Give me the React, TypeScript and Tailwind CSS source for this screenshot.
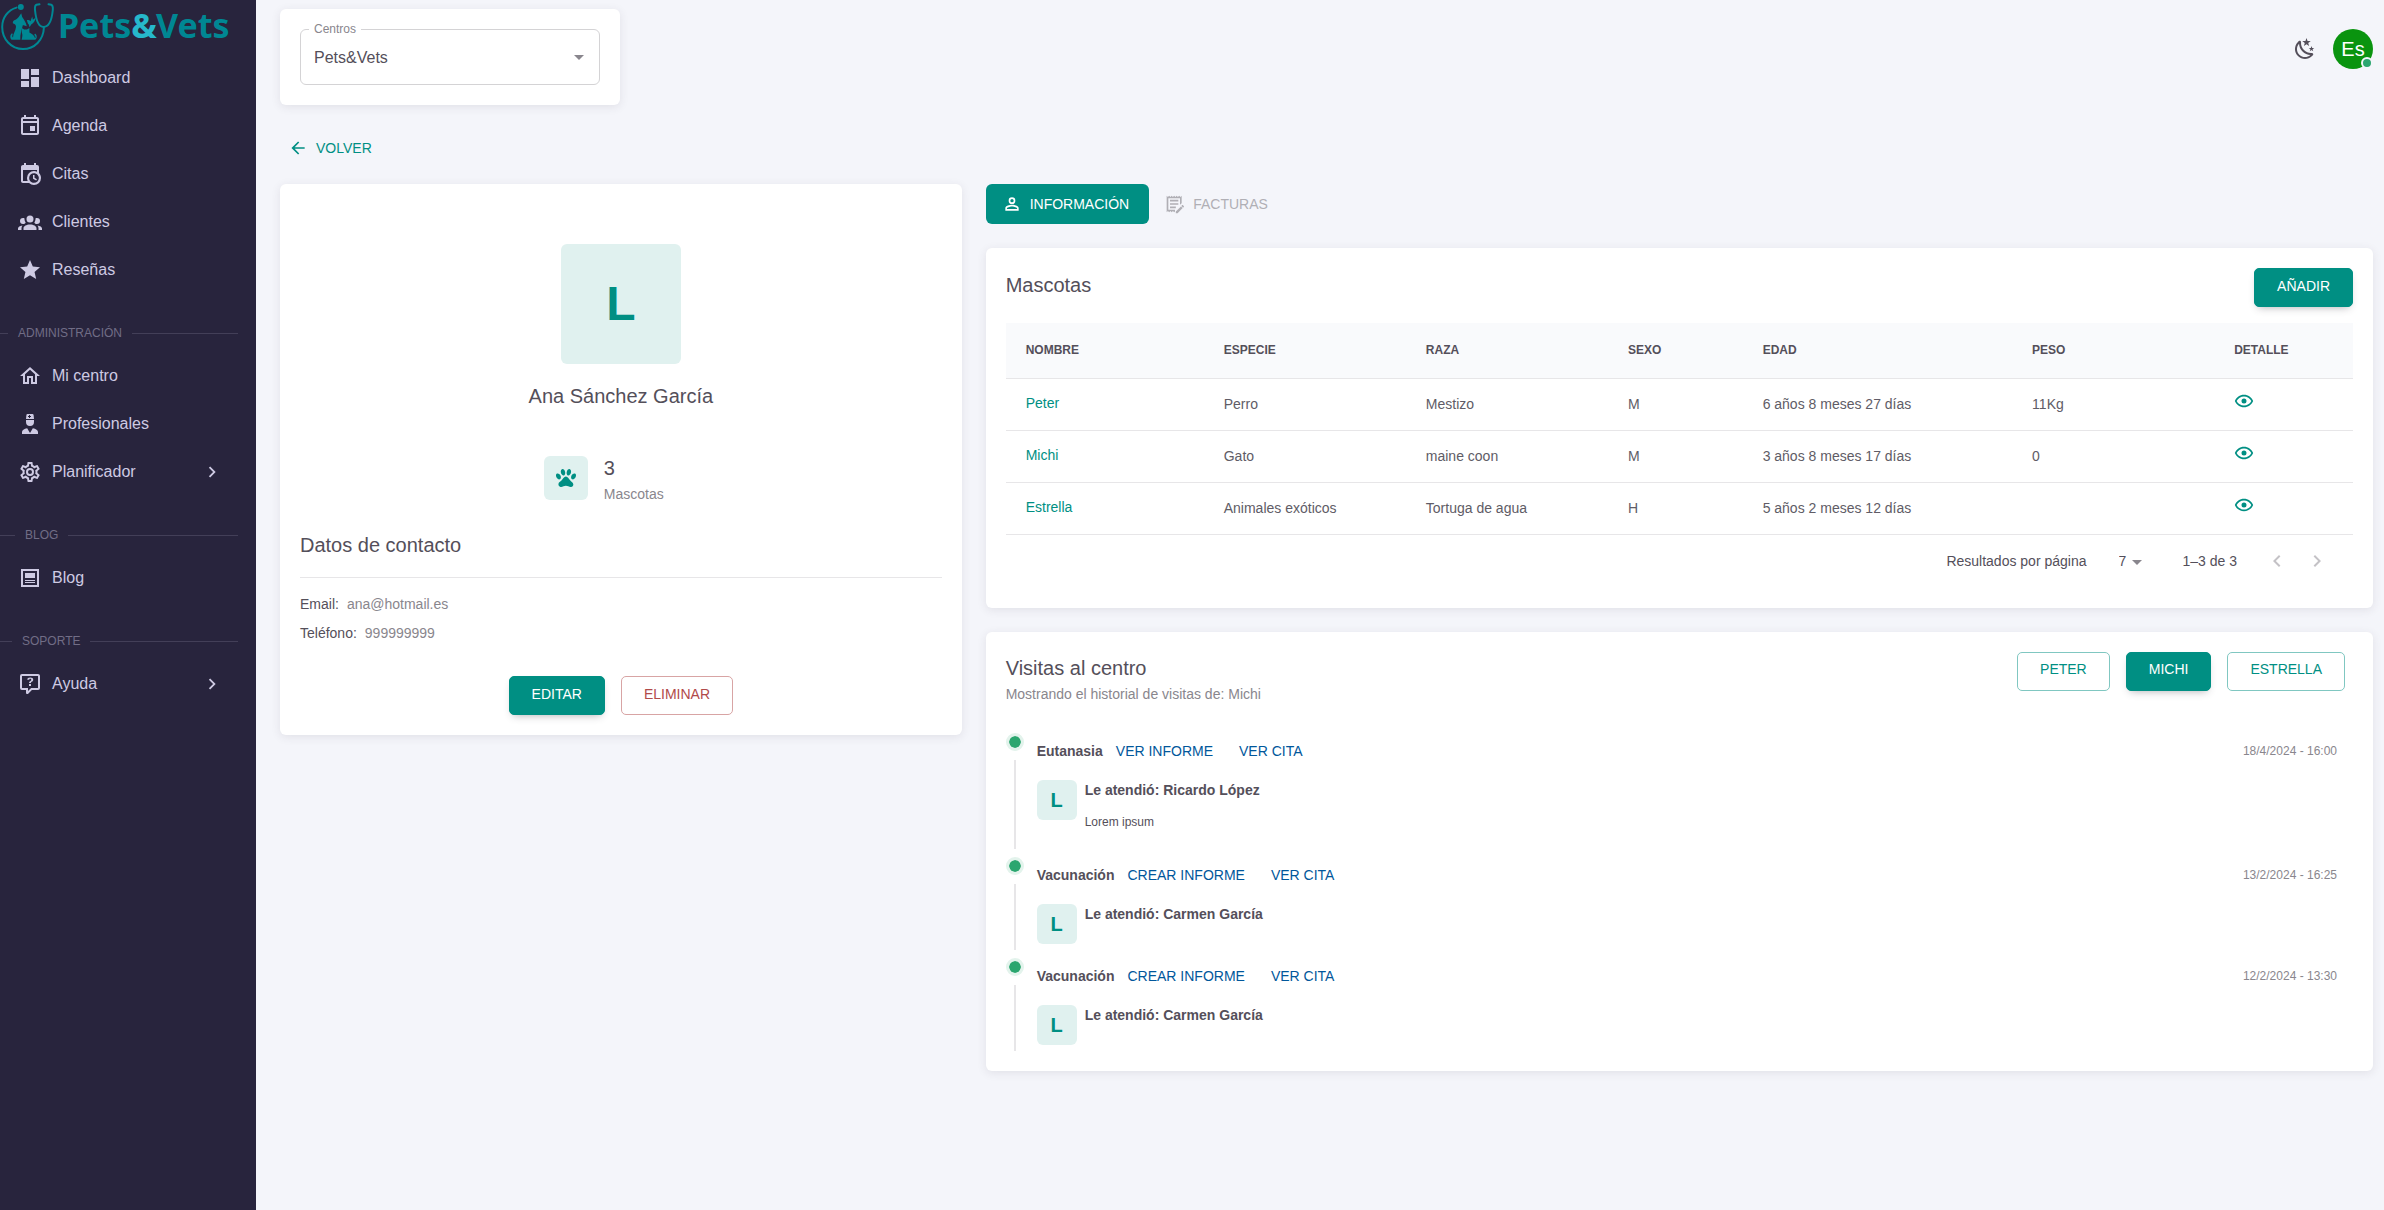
import { useState } from 'react';
import type { ReactNode } from 'react';
import clsx from 'clsx';

const ICONS = {
  dashboard: 'M13,3V9H21V3M13,21H21V11H13M3,21H11V15H3M3,13H11V3H3V13Z',
  agenda:
    'M12 12H17V17H12V12M19 3H18V1H16V3H8V1H6V3H5C3.9 3 3 3.9 3 5V19C3 20.1 3.9 21 5 21H19C20.1 21 21 20.1 21 19V5C21 3.9 20.1 3 19 3M19 5V7H5V5H19M5 19V9H19V19H5Z',
  citas:
    'M15,13H16.5V15.82L18.94,17.23L18.19,18.53L15,16.69V13M19,8H5V19H9.67C9.24,18.09 9,17.07 9,16A7,7 0 0,1 16,9C17.07,9 18.09,9.24 19,9.67V8M5,21C3.89,21 3,20.1 3,19V5C3,3.89 3.89,3 5,3H6V1H8V3H16V1H18V3H19A2,2 0 0,1 21,5V11.1C22.24,12.36 23,14.09 23,16A7,7 0 0,1 16,23C14.09,23 12.36,22.24 11.1,21H5M16,11.15A4.85,4.85 0 0,0 11.15,16C11.15,18.68 13.32,20.85 16,20.85A4.85,4.85 0 0,0 20.85,16C20.85,13.32 18.68,11.15 16,11.15Z',
  clientes:
    'M12,5.5A3.5,3.5 0 0,1 15.5,9A3.5,3.5 0 0,1 12,12.5A3.5,3.5 0 0,1 8.5,9A3.5,3.5 0 0,1 12,5.5M5,8C5.56,8 6.08,8.15 6.53,8.42C6.38,9.85 6.8,11.27 7.66,12.38C7.16,13.34 6.16,14 5,14A3,3 0 0,1 2,11A3,3 0 0,1 5,8M19,8A3,3 0 0,1 22,11A3,3 0 0,1 19,14C17.84,14 16.84,13.34 16.34,12.38C17.2,11.27 17.62,9.85 17.47,8.42C17.92,8.15 18.44,8 19,8M5.5,18.25C5.5,16.18 8.41,14.5 12,14.5C15.59,14.5 18.5,16.18 18.5,18.25V20H5.5V18.25M0,20V18.5C0,17.11 1.89,15.94 4.45,15.6C3.86,16.28 3.5,17.22 3.5,18.25V20H0M24,20H20.5V18.25C20.5,17.22 20.14,16.28 19.55,15.6C22.11,15.94 24,17.11 24,18.5V20Z',
  star: 'M12,17.27L18.18,21L16.54,13.97L22,9.24L14.81,8.62L12,2L9.19,8.62L2,9.24L7.45,13.97L5.82,21L12,17.27Z',
  home: 'M12 5.69L17 10.19V18H15V12H9V18H7V10.19L12 5.69M12 3L2 12H5V20H11V14H13V20H19V12H22',
  doctor:
    'M14.84,16.26C17.86,16.83 20,18.29 20,20V22H4V20C4,18.29 6.14,16.83 9.16,16.26L12,21L14.84,16.26M8,8H16V10A4,4 0 0,1 12,14A4,4 0 0,1 8,10V8M8,7L8.41,2.9C8.46,2.39 8.89,2 9.41,2H14.6C15.11,2 15.54,2.39 15.59,2.9L16,7H8M12,3H11V4H10V5H11V6H12V5H13V4H12V3Z',
  cog: 'M12,8A4,4 0 0,1 16,12A4,4 0 0,1 12,16A4,4 0 0,1 8,12A4,4 0 0,1 12,8M12,10A2,2 0 0,0 10,12A2,2 0 0,0 12,14A2,2 0 0,0 14,12A2,2 0 0,0 12,10M10,22C9.75,22 9.54,21.82 9.5,21.58L9.13,18.93C8.5,18.68 7.96,18.34 7.44,17.94L4.95,18.95C4.73,19.03 4.46,18.95 4.34,18.73L2.34,15.27C2.21,15.05 2.27,14.78 2.46,14.63L4.57,12.97L4.5,12L4.57,11L2.46,9.37C2.27,9.22 2.21,8.95 2.34,8.73L4.34,5.27C4.46,5.05 4.73,4.96 4.95,5.05L7.44,6.05C7.96,5.66 8.5,5.32 9.13,5.07L9.5,2.42C9.54,2.18 9.75,2 10,2H14C14.25,2 14.46,2.18 14.5,2.42L14.87,5.07C15.5,5.32 16.04,5.66 16.56,6.05L19.05,5.05C19.27,4.96 19.54,5.05 19.66,5.27L21.66,8.73C21.79,8.95 21.73,9.22 21.54,9.37L19.43,11L19.5,12L19.43,13L21.54,14.63C21.73,14.78 21.79,15.05 21.66,15.27L19.66,18.73C19.54,18.95 19.27,19.04 19.05,18.95L16.56,17.95C16.04,18.34 15.5,18.68 14.87,18.93L14.5,21.58C14.46,21.82 14.25,22 14,22H10M11.25,4L10.88,6.61C9.68,6.86 8.62,7.5 7.85,8.39L5.44,7.35L4.69,8.65L6.8,10.2C6.4,11.37 6.4,12.64 6.8,13.8L4.68,15.36L5.43,16.66L7.86,15.62C8.63,16.5 9.68,17.14 10.87,17.38L11.24,20H12.76L13.13,17.39C14.32,17.14 15.37,16.5 16.14,15.62L18.57,16.66L19.32,15.36L17.2,13.81C17.6,12.64 17.6,11.37 17.2,10.2L19.31,8.65L18.56,7.35L16.15,8.39C15.38,7.5 14.32,6.86 13.12,6.62L12.75,4H11.25Z',
  post: 'M19 5V19H5V5H19M21 3H3V21H21V3M17 17H7V16H17V17M17 15H7V14H17V15M17 12H7V7H17V12Z',
  help: 'M4,2A2,2 0 0,0 2,4V16A2,2 0 0,0 4,18H8V21A1,1 0 0,0 9,22H9.5C9.75,22 10,21.9 10.2,21.71L13.9,18H20A2,2 0 0,0 22,16V4C22,2.89 21.1,2 20,2H4M4,4H20V16H13.08L10,19.08V16H4V4M12.19,5.5C11.3,5.5 10.59,5.68 10.05,6.04C9.5,6.4 9.22,7 9.27,7.69H11.24C11.24,7.41 11.34,7.2 11.5,7.06C11.7,6.92 11.92,6.85 12.19,6.85C12.5,6.85 12.77,6.93 12.95,7.11C13.13,7.28 13.22,7.5 13.22,7.8C13.22,8.08 13.14,8.33 13,8.54C12.83,8.76 12.62,8.94 12.36,9.08C11.84,9.4 11.5,9.68 11.29,9.92C11.1,10.16 11,10.5 11,11H13C13,10.72 13.05,10.5 13.14,10.32C13.23,10.15 13.4,10 13.66,9.85C14.12,9.64 14.5,9.36 14.79,9C15.08,8.63 15.23,8.24 15.23,7.8C15.23,7.1 14.96,6.54 14.42,6.12C13.88,5.71 13.13,5.5 12.19,5.5M11,12V14H13V12H11Z',
  chevronRight: 'M8.59,16.58L13.17,12L8.59,7.41L10,6L16,12L10,18L8.59,16.58Z',
  chevronLeft: 'M15.41,16.58L10.83,12L15.41,7.41L14,6L8,12L14,18L15.41,16.58Z',
  caret: 'M7 10l5 5 5-5z',
  night:
    'M17.75,4.09L15.22,6.03L16.13,9.09L13.5,7.28L10.87,9.09L11.78,6.03L9.25,4.09L12.44,4L13.5,1L14.56,4L17.75,4.09M21.25,11L19.61,12.25L20.2,14.23L18.5,13.06L16.8,14.23L17.39,12.25L15.75,11L17.81,10.95L18.5,9L19.19,10.95L21.25,11M18.97,15.95C19.8,15.87 20.69,17.05 20.16,17.8C19.84,18.25 19.5,18.67 19.08,19.07C15.17,23 8.84,23 4.94,19.07C1.03,15.17 1.03,8.83 4.94,4.93C5.34,4.53 5.76,4.17 6.21,3.85C6.96,3.32 8.14,4.21 8.06,5.04C7.79,7.9 8.75,10.87 10.95,13.06C13.14,15.26 16.1,16.22 18.97,15.95M17.33,17.97C14.5,17.81 11.7,16.64 9.53,14.5C7.36,12.31 6.2,9.5 6.04,6.68C3.23,9.82 3.34,14.64 6.35,17.66C9.37,20.67 14.19,20.78 17.33,17.97Z',
  paw: 'M8.35,3C9.53,2.83 10.78,4.12 11.14,5.9C11.5,7.67 10.85,9.25 9.67,9.43C8.5,9.61 7.24,8.32 6.87,6.54C6.5,4.77 7.17,3.19 8.35,3M15.5,3C16.69,3.19 17.35,4.77 17,6.54C16.62,8.32 15.37,9.61 14.19,9.43C13,9.25 12.35,7.67 12.72,5.9C13.08,4.12 14.33,2.83 15.5,3M3,7.6C4.14,7.11 5.69,8 6.5,9.55C7.26,11.13 7,12.79 5.87,13.28C4.74,13.77 3.2,12.89 2.41,11.32C1.62,9.75 1.9,8.08 3,7.6M21,7.6C22.1,8.08 22.38,9.75 21.59,11.32C20.8,12.89 19.26,13.77 18.13,13.28C17,12.79 16.74,11.13 17.5,9.55C18.31,8 19.86,7.11 21,7.6M19.33,18.38C19.37,19.32 18.65,20.36 17.79,20.75C16,21.57 13.88,19.87 11.89,19.87C9.9,19.87 7.76,21.64 6,20.75C5,20.26 4.31,18.96 4.44,17.88C4.62,16.39 6.41,15.59 7.47,14.5C8.88,13.09 9.88,10.44 11.89,10.44C13.89,10.44 14.95,13.05 16.3,14.5C17.41,15.72 19.26,16.75 19.33,18.38Z',
  account:
    'M12,4A4,4 0 0,1 16,8A4,4 0 0,1 12,12A4,4 0 0,1 8,8A4,4 0 0,1 12,4M12,6A2,2 0 0,0 10,8A2,2 0 0,0 12,10A2,2 0 0,0 14,8A2,2 0 0,0 12,6M12,13C14.67,13 20,14.33 20,17V20H4V17C4,14.33 9.33,13 12,13M12,14.9C9.03,14.9 5.9,16.36 5.9,17V18.1H18.1V17C18.1,16.36 14.97,14.9 12,14.9Z',
  invoice:
    'M2,2L3.5,3.5L5,2L6.5,3.5L8,2L9.5,3.5L11,2L12.5,3.5L14,2L15.5,3.5L17,2L18.5,3.5L20,2V11L18,13V5H4V19H12V21L11,22L9.5,20.5L8,22L6.5,20.5L5,22L3.5,20.5L2,22V2M6,7H16V9H6V7M6,11H16V13H6V11M6,15H13V17H6V15M21,13.1C20.9,13.1 20.7,13.2 20.6,13.3L19.6,14.3L21.7,16.4L22.7,15.4C22.9,15.2 22.9,14.8 22.7,14.6L21.4,13.3C21.3,13.2 21.2,13.1 21,13.1M19.1,14.9L13,20.9V23H15.1L21.2,16.9L19.1,14.9Z',
  eye: 'M12,9A3,3 0 0,1 15,12A3,3 0 0,1 12,15A3,3 0 0,1 9,12A3,3 0 0,1 12,9M12,4.5C17,4.5 21.27,7.61 23,12C21.27,16.39 17,19.5 12,19.5C7,19.5 2.73,16.39 1,12C2.73,7.61 7,4.5 12,4.5M3.18,12C4.83,15.36 8.24,17.5 12,17.5C15.76,17.5 19.17,15.36 20.82,12C19.17,8.64 15.76,6.5 12,6.5C8.24,6.5 4.83,8.64 3.18,12Z',
  arrowLeft: 'M20,11V13H8L13.5,18.5L12.08,19.92L4.16,12L12.08,4.08L13.5,5.5L8,11H20Z',
};

type IconName = keyof typeof ICONS;

interface NavItem {
  label: string;
  icon: IconName;
  expandable?: boolean;
}

interface NavSection {
  title?: string;
  line?: string;
  items: NavItem[];
}

const NAV: NavSection[] = [
  {
    items: [
      { label: 'Dashboard', icon: 'dashboard' },
      { label: 'Agenda', icon: 'agenda' },
      { label: 'Citas', icon: 'citas' },
      { label: 'Clientes', icon: 'clientes' },
      { label: 'Reseñas', icon: 'star' },
    ],
  },
  {
    title: 'ADMINISTRACIÓN',
    line: 'w-2',
    items: [
      { label: 'Mi centro', icon: 'home' },
      { label: 'Profesionales', icon: 'doctor' },
      { label: 'Planificador', icon: 'cog', expandable: true },
    ],
  },
  { title: 'BLOG', line: 'w-[15px]', items: [{ label: 'Blog', icon: 'post' }] },
  { title: 'SOPORTE', line: 'w-3', items: [{ label: 'Ayuda', icon: 'help', expandable: true }] },
];

const COLUMNS = [
  { label: 'NOMBRE', width: 'w-[14.7%]' },
  { label: 'ESPECIE', width: 'w-[15%]' },
  { label: 'RAZA', width: 'w-[15%]' },
  { label: 'SEXO', width: 'w-[10%]' },
  { label: 'EDAD', width: 'w-[20%]' },
  { label: 'PESO', width: 'w-[15%]' },
  { label: 'DETALLE', width: 'w-[10.3%]' },
];

const PETS = [
  { nombre: 'Peter', especie: 'Perro', raza: 'Mestizo', sexo: 'M', edad: '6 años 8 meses 27 días', peso: '11Kg' },
  { nombre: 'Michi', especie: 'Gato', raza: 'maine coon', sexo: 'M', edad: '3 años 8 meses 17 días', peso: '0' },
  { nombre: 'Estrella', especie: 'Animales exóticos', raza: 'Tortuga de agua', sexo: 'H', edad: '5 años 2 meses 12 días', peso: '' },
];

const VISITS = [
  { tipo: 'Eutanasia', informe: 'VER INFORME', fecha: '18/4/2024 - 16:00', vet: 'Ricardo López', nota: 'Lorem ipsum' },
  { tipo: 'Vacunación', informe: 'CREAR INFORME', fecha: '13/2/2024 - 16:25', vet: 'Carmen García' },
  { tipo: 'Vacunación', informe: 'CREAR INFORME', fecha: '12/2/2024 - 13:30', vet: 'Carmen García' },
];

function Icon({ name, className = 'size-6' }: { name: IconName; className?: string }) {
  return (
    <svg viewBox="0 0 24 24" fill="currentColor" aria-hidden="true" className={clsx('shrink-0', className)}>
      <path d={ICONS[name]} fillRule={name === 'invoice' ? 'evenodd' : undefined} />
    </svg>
  );
}

function Card({ className, children }: { className?: string; children: ReactNode }) {
  return (
    <section className={clsx('rounded-md bg-white p-5 shadow-[0_2px_10px_0_rgba(58,53,65,0.1)]', className)}>
      {children}
    </section>
  );
}

type Variant = 'solid' | 'outline' | 'danger';

function Button({ variant = 'solid', onClick, children }: {
  variant?: Variant;
  onClick?: () => void;
  children: ReactNode;
}) {
  return (
    <button
      onClick={onClick}
      className={clsx(
        'h-[39px] rounded-[5px] border px-[22px] pb-1 text-sm',
        variant === 'solid' && 'border-[#008f83] bg-[#008f83] text-white shadow-[0_4px_8px_-4px_rgba(58,53,65,0.42)]',
        variant === 'outline' && 'border-[#80c7c1] text-[#008f83]',
        variant === 'danger' && 'border-[#d8a4a4] text-[#b14a4a]'
      )}
    >
      {children}
    </button>
  );
}

function Logo() {
  return (
    <a href="#" className="flex h-[54px] items-start">
      <svg viewBox="0 0 58 52" className="h-[52px] w-[58px] shrink-0" aria-hidden="true">
        <g fill="none" stroke="#008793" strokeWidth="2" strokeLinecap="round">
          <path d="M16.5 7.6C8 10 2.2 17.5 2.2 27C2.2 39 11 49 23 49C34.5 49 43.5 40 43.9 27.5" />
          <path d="M39.5 4.3L36.5 4.8C34.6 5.5 34.8 8 35 10C35.7 17 37.5 27 43.5 27C50 27 52.2 16 52.8 10C53 7.5 53 5.5 51.2 4.8L48.5 4.3" />
        </g>
        <g fill="#008793">
          <circle cx="20.8" cy="6.9" r="3" />
          <path d="M11.5 39.8C10 38.5 9.8 35.5 11.2 34C12 33.2 13 33.6 12.6 34.6C12 36 12.2 37 13 37.6C13 33.5 15.7 31 16 27C15.9 25.7 15.6 24.8 14.8 24.3L12.9 23.3C12.7 21.9 13.1 20.9 14.3 20.3C16 19.5 17.5 18.5 18.7 17L21.2 13.2L22.2 17C24 19.5 26 22.5 26.8 26.2C25.9 25.6 24.3 26 22.8 25.2C21.7 30 20 34 20.3 39.8Z" />
          <path d="M21.8 28L24.2 29.5H27L29.4 28V32.5C32.5 34 34.5 36 35 38C36 37.8 35.5 36.5 34.7 35.5C34 34.4 34.7 33.4 35.7 34C37.3 35.5 37.2 39.2 35 39.8H21.6C22.3 37 22.8 35 21.8 32.5Z" />
          <path d="M26.8 20.3C28.3 19.8 29.6 20.2 30.5 21.2L32.2 16.5L32.9 19.8L35.8 17.6C35.2 20.8 33.7 23.5 31.2 24.5L29.6 27.2L28.8 24.5C27.6 24 27.6 21.8 26.8 20.3Z" />
        </g>
      </svg>
      <span className="font-['Noto_Sans',sans-serif] text-[34px] leading-[50px] font-bold text-[#008793]">
        Pets<span className="text-[#26b8cb]">&amp;</span>Vets
      </span>
    </a>
  );
}

function Sidebar() {
  return (
    <aside className="w-64 shrink-0 bg-[#28243d] text-[#cecae3]">
      <Logo />
      <nav>
        {NAV.map((section, i) => (
          <div key={i}>
            {section.title && (
              <div className="flex h-[58px] items-center gap-[10px] pt-5 pr-[18px] text-xs text-[#716d86]">
                <span className={clsx('h-px bg-[#433f58]', section.line)} />
                {section.title}
                <span className="h-px flex-1 bg-[#433f58]" />
              </div>
            )}
            {section.items.map(item => (
              <a key={item.label} href="#" className="flex h-12 items-center pr-[33px] pl-[18px] text-base">
                <Icon name={item.icon} />
                <span className="flex-1 pl-[10px]">{item.label}</span>
                {item.expandable && <Icon name="chevronRight" className="size-[22px]" />}
              </a>
            ))}
          </div>
        ))}
      </nav>
    </aside>
  );
}

function TopBar() {
  return (
    <header className="flex items-start justify-between">
      <Card className="w-[340px]">
        <div className="relative">
          <label htmlFor="centro" className="absolute -top-2 left-[9px] bg-white px-[5px] text-xs text-[#89868d]">
            Centros
          </label>
          <select
            id="centro"
            className="h-14 w-full appearance-none rounded-md border border-[#d4d3d5] px-[13px] pt-[2px] text-base text-[#544f5a]"
          >
            <option>Pets&amp;Vets</option>
          </select>
          <span className="pointer-events-none absolute top-4 right-[9px] text-[#89868d]">
            <Icon name="caret" />
          </span>
        </div>
      </Card>
      <div className="flex items-center gap-4 pt-5">
        <button aria-label="Cambiar tema" className="text-[#544f5a]">
          <Icon name="night" />
        </button>
        <button className="relative size-10 rounded-full bg-[#0a940f] text-xl text-white">
          Es
          <span className="absolute right-0 bottom-0 size-3 rounded-full border-2 border-[#f4f5fa] bg-[#2ba66f]" />
        </button>
      </div>
    </header>
  );
}

function ClientCard() {
  return (
    <Card className="pt-[60px]">
      <div className="flex flex-col items-center">
        <div className="flex size-[120px] items-center justify-center rounded-md bg-[#e0f1ef] text-5xl font-bold text-[#008f83]">
          L
        </div>
        <h2 className="mt-4 text-xl leading-8">Ana Sánchez García</h2>
        <div className="mt-10 flex items-center gap-4 pr-[34px]">
          <div className="flex size-11 items-center justify-center rounded-md bg-[#e0f1ef] text-[#008f83]">
            <Icon name="paw" />
          </div>
          <div>
            <p className="text-xl leading-8">3</p>
            <p className="text-sm text-[#89868d]">Mascotas</p>
          </div>
        </div>
      </div>
      <h3 className="mt-[25px] border-b border-[#e7e6e8] pb-4 text-xl leading-8">Datos de contacto</h3>
      <dl className="mt-4 flex flex-col gap-2 text-sm leading-[21px]">
        <div className="flex gap-2">
          <dt>Email:</dt>
          <dd className="text-[#89868d]">ana@hotmail.es</dd>
        </div>
        <div className="flex gap-2">
          <dt>Teléfono:</dt>
          <dd className="text-[#89868d]">999999999</dd>
        </div>
      </dl>
      <div className="mt-8 flex justify-center gap-4">
        <Button>EDITAR</Button>
        <Button variant="danger">ELIMINAR</Button>
      </div>
    </Card>
  );
}

function PetsCard() {
  return (
    <Card className="pb-[21px]">
      <div className="flex items-start justify-between">
        <h3 className="pt-px text-xl leading-8">Mascotas</h3>
        <Button>AÑADIR</Button>
      </div>
      <table className="mt-4 w-full table-fixed text-left text-sm">
        <thead>
          <tr className="h-[55px] border-b border-[#e7e6e8] bg-[#f9fafc] text-xs">
            {COLUMNS.map(col => (
              <th key={col.label} className={clsx('px-5 font-bold', col.width)}>
                {col.label}
              </th>
            ))}
          </tr>
        </thead>
        <tbody>
          {PETS.map(pet => (
            <tr key={pet.nombre} className="h-[52px] border-b border-[#e7e6e8] text-[#605c66]">
              <td className="px-5 pb-[2px]">
                <a href="#" className="text-[#008f83]">{pet.nombre}</a>
              </td>
              <td className="px-5">{pet.especie}</td>
              <td className="px-5">{pet.raza}</td>
              <td className="px-5">{pet.sexo}</td>
              <td className="px-5">{pet.edad}</td>
              <td className="px-5">{pet.peso}</td>
              <td className="px-5 pb-[6px]">
                <button aria-label={`Ver ${pet.nombre}`} className="block text-[#008f83]">
                  <Icon name="eye" className="size-5" />
                </button>
              </td>
            </tr>
          ))}
        </tbody>
      </table>
      <div className="flex h-[52px] items-center justify-end pr-4 text-sm">
        <label htmlFor="por-pagina">Resultados por página</label>
        <div className="relative ml-8 w-9">
          <select id="por-pagina" className="w-full appearance-none">
            <option>7</option>
          </select>
          <span className="pointer-events-none absolute -top-px right-[6px] text-[#89868d]">
            <Icon name="caret" />
          </span>
        </div>
        <span className="ml-7">1–3 de 3</span>
        <div className="ml-5 flex text-[#c4c2c6]">
          <button disabled aria-label="Página anterior" className="p-2">
            <Icon name="chevronLeft" />
          </button>
          <button disabled aria-label="Página siguiente" className="p-2">
            <Icon name="chevronRight" />
          </button>
        </div>
      </div>
    </Card>
  );
}

function VisitsCard() {
  const [selected, setSelected] = useState('Michi');

  return (
    <Card>
      <div className="flex items-start justify-between">
        <div>
          <h3 className="text-xl leading-8">Visitas al centro</h3>
          <p className="text-sm text-[#89868d]">Mostrando el historial de visitas de: {selected}</p>
        </div>
        <div className="flex gap-4 pr-2">
          {PETS.map(pet => (
            <Button
              key={pet.nombre}
              variant={selected === pet.nombre ? 'solid' : 'outline'}
              onClick={() => setSelected(pet.nombre)}
            >
              {pet.nombre.toUpperCase()}
            </Button>
          ))}
        </div>
      </div>
      <ul className="mt-[21px]">
        {VISITS.map(visit => (
          <li key={visit.fecha} className="flex gap-[13px]">
            <div className="flex flex-col items-center">
              <span className="mt-2 mb-[9px] size-[18px] rounded-full border-3 border-[#e3f3ec] bg-[#2ba66f] bg-clip-padding" />
              <span className="w-[2px] flex-1 bg-[#e7e6e8]" />
            </div>
            <div className="flex-1 pt-4 pb-[6px]">
              <div className="flex h-5 items-center pr-4">
                <span className="text-sm font-bold">{visit.tipo}</span>
                <a href="#" className="ml-[13px] text-sm text-[#01579b]">{visit.informe}</a>
                <a href="#" className="ml-[26px] text-sm text-[#01579b]">VER CITA</a>
                <span className="ml-auto text-xs text-[#89868d]">{visit.fecha}</span>
              </div>
              <div className="mt-[19px] flex gap-2">
                <div className="flex size-10 items-center justify-center rounded-md bg-[#e0f1ef] text-xl font-bold text-[#008f83]">
                  L
                </div>
                <div>
                  <p className="text-sm font-bold">Le atendió: {visit.vet}</p>
                  {visit.nota && <p className="mt-[14px] pb-[13px] text-xs">{visit.nota}</p>}
                </div>
              </div>
            </div>
          </li>
        ))}
      </ul>
    </Card>
  );
}

export default function App() {
  const [tab, setTab] = useState('info');

  return (
    <div className="flex min-h-screen bg-[#f4f5fa] font-['Liberation_Sans',sans-serif] text-[#544f5a]">
      <Sidebar />
      <main className="min-w-0 flex-1 pt-[9px] pr-[11px] pb-6 pl-6">
        <TopBar />
        <button className="mt-[33px] flex items-center gap-2 pl-2 text-sm text-[#008f83]">
          <Icon name="arrowLeft" className="size-5" />
          VOLVER
        </button>
        <div className="mt-[26px] grid grid-cols-12 items-start gap-6">
          <div className="col-span-4">
            <ClientCard />
          </div>
          <div className="col-span-8 flex flex-col gap-6">
            <div role="tablist" className="flex h-10 text-sm">
              <button
                role="tab"
                aria-selected={tab === 'info'}
                onClick={() => setTab('info')}
                className={clsx(
                  'flex items-center gap-2 rounded-md pr-5 pl-4',
                  tab === 'info' ? 'bg-[#008f83] text-white' : 'text-[#b0afb5]'
                )}
              >
                <Icon name="account" className="size-5" />
                <span className="pb-px">INFORMACIÓN</span>
              </button>
              <button
                role="tab"
                aria-selected={tab === 'facturas'}
                onClick={() => setTab('facturas')}
                className={clsx(
                  'flex items-center gap-2 rounded-md pr-5 pl-4',
                  tab === 'facturas' ? 'bg-[#008f83] text-white' : 'text-[#b0afb5]'
                )}
              >
                <Icon name="invoice" className="size-5" />
                <span className="pb-px">FACTURAS</span>
              </button>
            </div>
            <PetsCard />
            <VisitsCard />
          </div>
        </div>
      </main>
    </div>
  );
}
